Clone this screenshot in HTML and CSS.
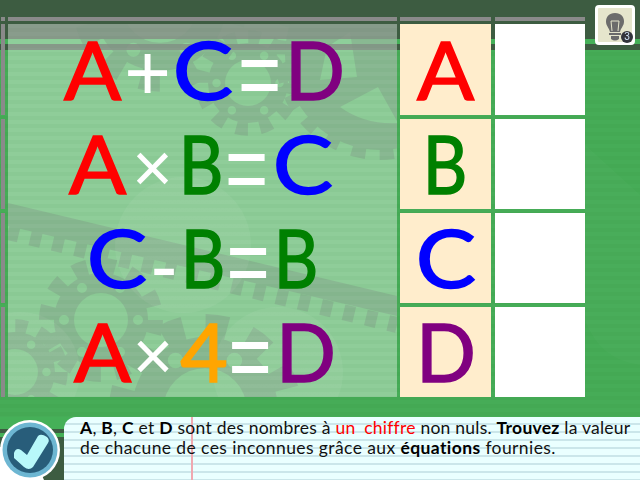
FILE: index.html
```html
<!DOCTYPE html>
<html lang="fr">
<head>
<meta charset="utf-8">
<title>Équations</title>
<link rel="stylesheet" href="styles.css">
</head>
<body>
<main class="app">
  <svg class="scene" width="640" height="480" viewBox="0 0 640 480" aria-hidden="true">
    <defs>
      <clipPath id="panel-clip"><rect x="8" y="24" width="389" height="373"/></clipPath>
      <g id="gear">
        <circle r="54" fill="none" stroke="currentColor" stroke-width="16" stroke-dasharray="14 14.27"/>
        <path fill-rule="evenodd" d="M-47 0a47 47 0 1 0 94 0a47 47 0 1 0-94 0ZM-27 0a27 27 0 1 0 54 0a27 27 0 1 0-54 0ZM-42 0a5 5 0 1 0 10 0a5 5 0 1 0-10 0ZM32 0a5 5 0 1 0 10 0a5 5 0 1 0-10 0ZM-24 -32a5 5 0 1 0 10 0a5 5 0 1 0-10 0ZM14 -32a5 5 0 1 0 10 0a5 5 0 1 0-10 0ZM-24 32a5 5 0 1 0 10 0a5 5 0 1 0-10 0ZM14 32a5 5 0 1 0 10 0a5 5 0 1 0-10 0Z"/>
      </g>
    </defs>
    <path class="sheen" d="M585 145L640 195V365Q600 360 585 320Z"/>
    <g clip-path="url(#panel-clip)">
      <g class="gears">
        <use href="#gear" transform="translate(248 83) scale(.85)"/>
        <use href="#gear" transform="translate(160 5) scale(1.4)"/>
        <use href="#gear" transform="translate(101 320)"/>
        <use href="#gear" transform="translate(15 372) scale(.85)"/>
        <use href="#gear" transform="translate(205 410) scale(1.55)"/>
        <circle cx="380" cy="55" r="98" fill="none" stroke="currentColor" stroke-width="14" stroke-dasharray="14 14"/>
        <path fill-rule="evenodd" d="M285 55a95 95 0 1 0 190 0a95 95 0 1 0-190 0ZM350 32L327 47L320 80L357 77ZM340 107L378 87L398 123Q365 125 340 107Z"/>
        <path d="M8 203L397 296V316L8 226Z"/>
        <path class="rack" d="M8 232L397 325"/>
      </g>
      <circle class="blob" cx="183" cy="245" r="68"/>
      <circle class="blob" cx="278" cy="372" r="65"/>
      <circle class="blob" cx="20" cy="372" r="60"/>
    </g>
  </svg>

  <section class="board">
    <div class="rail">
      <span class="rail-cell head"></span>
      <span class="rail-cell"></span>
      <span class="rail-cell"></span>
      <span class="rail-cell"></span>
      <span class="rail-cell"></span>
    </div>
    <div class="equations">
      <span class="head-line"></span>
      <div class="panel">
        <p class="eq"><span class="glyph a red">A</span><span class="op plus">+</span><span class="glyph c blue">C</span><span class="op equals">=</span><span class="glyph d purple">D</span></p>
        <p class="eq"><span class="glyph a red">A</span><span class="op times">×</span><span class="glyph b green">B</span><span class="op equals">=</span><span class="glyph c blue">C</span></p>
        <p class="eq"><span class="glyph c blue">C</span><span class="op minus">-</span><span class="glyph b green">B</span><span class="op equals">=</span><span class="glyph b green">B</span></p>
        <p class="eq"><span class="glyph a red">A</span><span class="op times">×</span><span class="glyph four orange">4</span><span class="op equals">=</span><span class="glyph d purple">D</span></p>
      </div>
    </div>
    <div class="column">
      <span class="head-line"></span>
      <div class="cell letter"><span class="glyph a red">A</span></div>
      <div class="cell letter"><span class="glyph b green">B</span></div>
      <div class="cell letter"><span class="glyph c blue">C</span></div>
      <div class="cell letter"><span class="glyph d purple">D</span></div>
    </div>
    <div class="column answers">
      <span class="head-line"></span>
      <div class="cell blank"></div>
      <div class="cell blank"></div>
      <div class="cell blank"></div>
      <div class="cell blank"></div>
    </div>
  </section>

  <button class="hint" type="button" aria-label="Indice">
    <svg width="34" height="34" viewBox="0 0 34 34">
      <path fill="#6b6b6b" d="M17 5C11 5 8 9 8 13.500C8 18 11 19.500 12 24H22C23 19.500 26 18 26 13.500C26 9 23 5 17 5Z"/>
      <path fill="none" stroke="#e5e5cc" stroke-width="1" d="M14 23L13 13H21L20 23"/>
      <rect x="11" y="25" width="12" height="2" fill="#6b6b6b"/>
      <path fill="#6b6b6b" d="M13 28H21V31Q17 34 13 31Z"/>
    </svg>
    <span class="count">3</span>
  </button>

  <footer class="footer">
    <div class="check">
      <svg width="72" height="63" viewBox="0 0 72 63" aria-hidden="true">
        <path fill="#fff" d="M0 30H30L44 63H0Z"/>
        <circle cx="30" cy="33" r="30" fill="#fff"/>
        <circle cx="30" cy="33" r="27.500" fill="#6db6d2"/>
        <circle cx="30" cy="33" r="23" fill="#285d7a"/>
        <path fill="#b8f8fa" d="M14 36Q16 30 21 33L27 38L38 19Q41 16 47 20Q50 23 48 26L33 50Q29 54 24 50L14 41Z"/>
      </svg>
    </div>
    <div class="note">
      <p class="line tight"><b>A</b>, <b>B</b>, <b>C</b> et <b>D</b> sont des nombres à <span class="key">un chiffre</span> non nuls. <b>Trouvez</b> la valeur</p>
      <p class="line">de chacune de ces inconnues grâce aux <b>équations</b> fournies.</p>
    </div>
  </footer>
</main>
</body>
</html>
```

FILE: styles.css
```css
* { box-sizing: border-box; }
html, body { margin: 0; height: 100%; overflow: hidden; }
.app {
  position: relative;
  width: 640px;
  height: 480px;
  overflow: hidden;
  font-family: "Lato", "Liberation Sans", sans-serif;
  background:
    linear-gradient(#3d5c41 0 39px, #45b058 39px 44px, #3d5c41 44px 50px, transparent 50px),
    repeating-linear-gradient(#46ac57 0 4px, #44a954 4px 8px);
}
.scene { position: absolute; left: 0; top: 0; }
.sheen { fill: rgba(255,255,255,.02); }
.gears { color: #30583a; fill: #30583a; opacity: .4; }
.rack { fill: none; stroke: #30583a; stroke-width: 16; stroke-dasharray: 11 12; }
.blob { fill: rgba(255,255,255,.05); }

.board {
  position: relative;
  display: flex;
  padding: 17px 0 0 1px;
  height: 397px;
}
.rail { width: 4px; margin-right: 3px; display: flex; flex-direction: column; gap: 4px; }
.rail-cell { flex: 0 0 90px; background: #8a8a8a; }
.rail-cell:nth-child(2) { flex-basis: 91px; }
.rail-cell.head { flex: 0 0 4px; margin-bottom: -1px; }

.equations { width: 389px; margin-right: 3px; display: flex; flex-direction: column; }
.head-line { display: block; flex: 0 0 4px; height: 4px; margin-bottom: 3px; background: #8a8a8a; }
.panel {
  flex: 1;
  display: grid;
  grid-template-rows: 91px 90px 90px 90px;
  row-gap: 4px;
  background: repeating-linear-gradient(rgba(255,255,255,.395) 0 4px, rgba(255,255,255,.375) 4px 8px);
}
.eq {
  margin: 0;
  display: flex;
  justify-content: center;
  align-items: center;
  gap: 7px;
  padding-bottom: 4px;
}

.glyph {
  display: flex;
  justify-content: center;
  font-size: 82px;
  line-height: 1;
  -webkit-text-stroke: 1.6px currentColor;
}
.glyph.a { width: 59px; transform: scaleX(1.03); }
.glyph.b { width: 40px; transform: translateX(-1px) scaleX(.84); }
.glyph.c { width: 60px; transform: translateX(-2px) scaleX(1.1); }
.glyph.d { width: 54px; transform: scaleX(.96); }
.glyph.four { width: 45px; transform: translateX(1px); }

.op {
  display: flex;
  justify-content: center;
  color: #fff;
  font-family: "Liberation Sans", sans-serif;
  line-height: 1;
}
.plus { width: 39px; font-size: 80px; transform: translate(-1px, 5px); }
.equals { width: 39px; font-size: 74px; transform: translate(-2px, 6px) scaleY(1.3); }
.times { width: 31px; margin: 0 2px; font-size: 70px; transform: translate(-3px, 6px); }
.minus { width: 21px; font-size: 80px; transform: translate(-2px, 10px); }
.eq:nth-child(2) .a { margin-right: 4px; transform: translateX(-2px) scaleX(1.03); }
.eq:nth-child(2) .times { transform: translate(-5px, 6px); }

.column { display: flex; flex-direction: column; margin-right: 4px; width: 91px; }
.column .cell { flex: 0 0 90px; margin-bottom: 4px; }
.column .cell:nth-child(2) { flex-basis: 91px; }
.answers { width: 90px; margin-right: 0; }
.letter {
  display: flex;
  align-items: center;
  justify-content: center;
  padding-bottom: 4px;
  background: #ffedcc;
}
.letter .glyph.c { transform: scaleX(1.1); }
.blank { background: #fff; }
.red { color: #f00; }
.blue { color: #00f; }
.green { color: #008000; }
.purple { color: #800080; }
.orange { color: #ffa500; }

.hint {
  position: absolute;
  left: 595px;
  top: 5px;
  width: 40px;
  height: 40px;
  padding: 0;
  display: flex;
  align-items: center;
  justify-content: center;
  border: 3px solid #fff;
  border-radius: 4px;
  background: #e5e5cc;
}
.count {
  position: absolute;
  left: 23px;
  top: 23px;
  width: 12px;
  height: 12px;
  border-radius: 50%;
  background: #33343c;
  color: #cfe0f5;
  font: 10px/12px "Liberation Sans", sans-serif;
  text-align: center;
}

.footer {
  position: absolute;
  left: 0;
  right: 0;
  top: 417px;
  height: 63px;
  display: flex;
  background: linear-gradient(#45b058 0 12px, #3d5c41 12px 16px, #45b058 16px 20px, #3d5c41 20px);
}
.check { position: absolute; left: 0; top: 0; line-height: 0; }
.note {
  margin-left: 64px;
  flex: 1;
  padding: 1px 0 0 16px;
  border-top-left-radius: 12px;
  background:
    linear-gradient(90deg, transparent 127px, #f0a8b0 127px 129px, transparent 129px),
    repeating-linear-gradient(transparent 0 6px, #cbe6ea 6px 8px),
    #eaffff;
}
.line {
  margin: 0;
  font-size: 17.500px;
  letter-spacing: .4px;
  line-height: 20px;
  white-space: nowrap;
  color: #111;
}
.line.tight { letter-spacing: .24px; }
.line b { font-weight: 700; color: #000; }
.key { color: #f00; word-spacing: 4px; }
```
